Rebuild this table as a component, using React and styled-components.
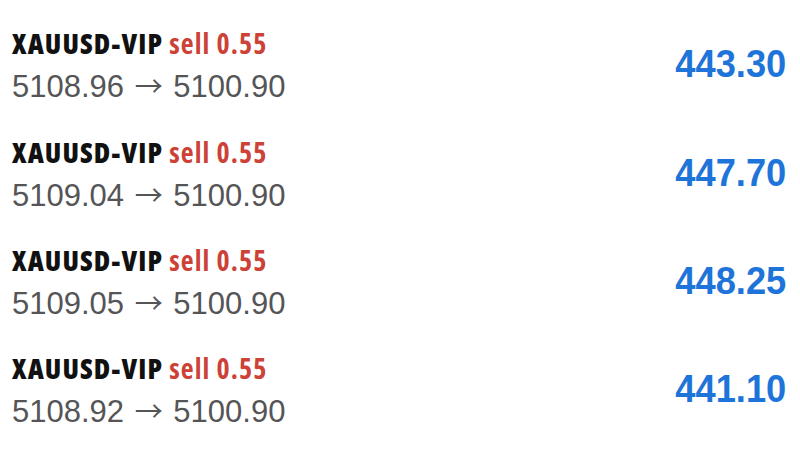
import React from "react";
import styled, { createGlobalStyle } from "styled-components";

const Global = createGlobalStyle`
  html, body { margin: 0; padding: 0; background: #ffffff; }
  body { width: 800px; height: 450px; overflow: hidden; }
`;

const List = styled.div`
  display: flex;
  flex-direction: column;
  padding-top: 10px;
`;

const Row = styled.div`
  height: 108.4px;
  display: flex;
  align-items: center;
  justify-content: space-between;
  padding: 0 14px 0 12px;
  box-sizing: border-box;
`;

const Info = styled.div`
  display: flex;
  flex-direction: column;
  gap: 8px;
  padding-top: 4px;
`;

const Title = styled.div`
  font-family: "Open Sans", "DejaVu Sans", sans-serif;
  font-weight: 800;
  font-stretch: 75%;
  font-size: 28px;
  line-height: 32px;
  letter-spacing: 1.1px;
  color: #111111;
  white-space: nowrap;
`;

const Side = styled.span`
  color: #cc4236;
  font-weight: 700;
`;

const Prices = styled.div`
  font-family: "Liberation Sans", Arial, sans-serif;
  font-size: 31px;
  line-height: 36px;
  color: #555557;
  white-space: nowrap;
`;

const Arrow = styled.span`
  font-family: "Noto Sans CJK SC", "DejaVu Sans", sans-serif;
  font-size: 28px;
  margin: 0 2px;
`;

const Profit = styled.div`
  font-family: "Liberation Sans", Arial, sans-serif;
  font-weight: 700;
  font-size: 39px;
  color: #1e74d8;
  transform: scaleX(0.93);
  transform-origin: right center;
`;

const trades = [
  { open: "5108.96", close: "5100.90", profit: "443.30" },
  { open: "5109.04", close: "5100.90", profit: "447.70" },
  { open: "5109.05", close: "5100.90", profit: "448.25" },
  { open: "5108.92", close: "5100.90", profit: "441.10" },
];

export default function App() {
  return (
    <>
      <Global />
      <List>
        {trades.map((t, i) => (
          <Row key={i}>
            <Info>
              <Title>
                XAUUSD-VIP <Side>sell 0.55</Side>
              </Title>
              <Prices>
                {t.open} <Arrow>→</Arrow> {t.close}
              </Prices>
            </Info>
            <Profit>{t.profit}</Profit>
          </Row>
        ))}
      </List>
    </>
  );
}
